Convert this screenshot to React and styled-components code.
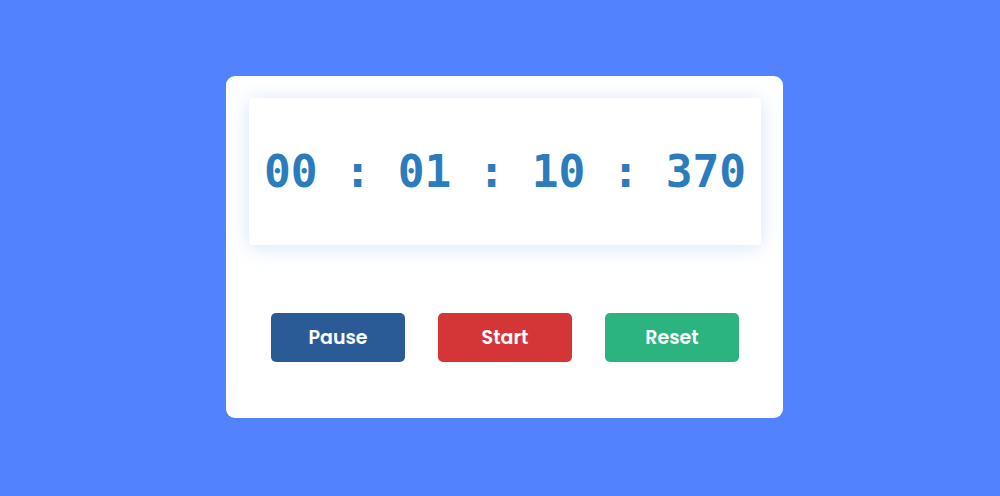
import React from 'react'
import styled, { createGlobalStyle } from 'styled-components'

const Global = createGlobalStyle`
  html, body {
    margin: 0;
    padding: 0;
    background: #5282fd;
  }
`

const Page = styled.div`
  width: 1000px;
  height: 496px;
  display: flex;
  justify-content: center;
  align-items: flex-start;
  padding: 76px 0 0 9px;
  box-sizing: border-box;
  background: #5282fd;
`

const Card = styled.div`
  width: 557px;
  height: 342px;
  box-sizing: border-box;
  background: #fff;
  border-radius: 9px;
  padding: 22px 22px 0 23px;
  display: flex;
  flex-direction: column;
  align-items: stretch;
`

const Display = styled.div`
  height: 147px;
  background: #fff;
  border-radius: 4px;
  box-shadow: 0 2px 20px rgba(70, 130, 225, 0.22);
  display: flex;
  align-items: center;
  justify-content: center;
  font-family: 'DejaVu Sans Mono', 'Liberation Mono', monospace;
  font-weight: bold;
  font-size: 44.5px;
  color: #2a7cbd;
  white-space: pre;
`

const Controls = styled.div`
  margin-top: 68px;
  display: flex;
  justify-content: center;
  gap: 33px;
`

const Button = styled.button`
  width: 134px;
  height: 49px;
  border: none;
  border-radius: 5px;
  background: ${p => p.color};
  color: #fff;
  font-family: 'Poppins', 'Inter', 'Open Sans', sans-serif;
  font-weight: 600;
  font-size: 19px;
  cursor: pointer;
`

const App = () => {
  return (
    <Page>
      <Global />
      <Card>
        <Display>00 : 01 : 10 : 370</Display>
        <Controls>
          <Button color="#2b5b97">Pause</Button>
          <Button color="#d43637">Start</Button>
          <Button color="#2bb47f">Reset</Button>
        </Controls>
      </Card>
    </Page>
  )
}

export default App
